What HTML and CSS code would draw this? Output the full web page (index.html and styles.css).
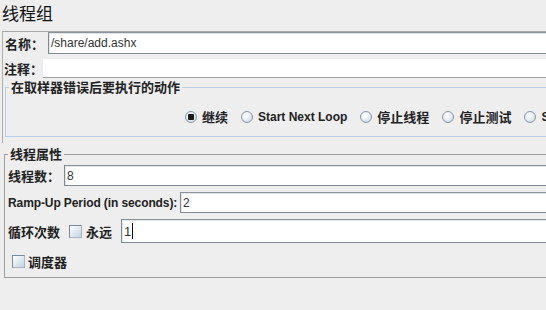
FILE: index.html
```html
<!DOCTYPE html>
<html lang="zh">
<head>
    <meta charset="UTF-8">
    <title>线程组</title>
    <link rel="stylesheet" href="styles.css">
</head>
<body>
    <h1 class="title">线程组</h1>

    <div class="panel">
        <div class="row name-row">
            <label class="label name-label">名称：</label>
            <div class="field">/share/add.ashx</div>
        </div>
        <div class="row comment-row">
            <label class="label comment-label">注释：</label>
            <div class="field plain"></div>
        </div>

        <fieldset class="box action-box">
            <legend>在取样器错误后要执行的动作</legend>
            <div class="radios">
                <span class="opt"><span class="radio on"></span><span class="cjk">继续</span></span>
                <span class="opt"><span class="radio"></span><span class="en">Start Next Loop</span></span>
                <span class="opt"><span class="radio"></span><span class="cjk">停止线程</span></span>
                <span class="opt"><span class="radio"></span><span class="cjk">停止测试</span></span>
                <span class="opt"><span class="radio"></span><span class="en">Stop Test Now</span></span>
            </div>
        </fieldset>
    </div>

    <fieldset class="box props-box">
        <legend>线程属性</legend>
        <div class="row threads-row">
            <label class="label cjk">线程数：</label>
            <div class="field">8</div>
        </div>
        <div class="row ramp-row">
            <label class="label en">Ramp-Up Period (in seconds):</label>
            <div class="field">2</div>
        </div>
        <div class="row loop-row">
            <label class="label cjk">循环次数</label>
            <span class="check"></span>
            <span class="cjk forever">永远</span>
            <div class="field">1<span class="caret"></span></div>
        </div>
        <div class="row sched-row">
            <span class="check"></span>
            <span class="cjk">调度器</span>
        </div>
    </fieldset>
</body>
</html>
```

FILE: styles.css
```css
body {
    margin: 0;
    background-color: #eeeeee;
    font-family: "Liberation Sans", "Noto Sans CJK SC", sans-serif;
    color: #222;
    width: 546px;
    height: 310px;
    overflow: hidden;
}

.title {
    margin: 0;
    padding: 1px 0 0 2px;
    height: 30px;
    font-family: "Noto Sans CJK SC", sans-serif;
    font-size: 17px;
    font-weight: normal;
    line-height: 24px;
    color: #111;
}

.panel {
    margin-left: 2px;
    margin-right: -40px;
    border-left: 1px solid #b0b0b0;
    border-top: 1px solid #a8a8a8;
    height: 111px;
}

.row {
    display: flex;
    align-items: center;
}

.label,
.cjk {
    font-family: "Noto Sans CJK SC", sans-serif;
    font-size: 13px;
    font-weight: bold;
    white-space: nowrap;
}

.en {
    font-family: "Liberation Sans", sans-serif;
    font-size: 12px;
    font-weight: bold;
    white-space: nowrap;
}

.field {
    flex: 1;
    height: 100%;
    box-sizing: border-box;
    background-color: #fff;
    border: 1px solid #7f8c97;
    border-top-color: #8a939b;
    box-shadow: inset 1px 1px 0 #e2e6ea;
    font-family: "Liberation Sans", sans-serif;
    font-size: 12px;
    color: #333;
    padding-left: 2px;
    display: flex;
    align-items: center;
}

.field.plain {
    border: none;
    box-shadow: none;
}

.name-row {
    height: 22px;
}

.name-label {
    width: 45px;
    padding-left: 2px;
    box-sizing: border-box;
}

.comment-row {
    margin-top: 5px;
    height: 19px;
}

.comment-row .field {
    border-bottom: 1px solid #a0a0a0;
}

.comment-label {
    width: 40px;
    padding-left: 1px;
    box-sizing: border-box;
}

.box {
    margin: 0;
    padding: 0;
    min-width: 0;
}

.box legend {
    font-family: "Noto Sans CJK SC", sans-serif;
    font-size: 13px;
    font-weight: bold;
    padding: 0 2px;
    margin-left: 3px;
    line-height: 14px;
}

.action-box {
    margin: 2px 0 0 2px;
    height: 57px;
    box-sizing: border-box;
    border: 1px solid #b8cfe5;
    border-right: none;
}

.radios {
    display: flex;
    align-items: center;
    padding: 13px 0 0 179px;
    gap: 13px;
}

.opt {
    display: flex;
    align-items: center;
    gap: 5px;
}

.radio {
    width: 12px;
    height: 12px;
    box-sizing: border-box;
    border-radius: 50%;
    border: 1px solid #8a98a5;
    background: radial-gradient(circle at 40% 35%, #ffffff 0%, #e8eef4 45%, #c3d0dc 100%);
    position: relative;
}

.radio.on::after {
    content: "";
    position: absolute;
    left: 2px;
    top: 2px;
    width: 6px;
    height: 6px;
    border-radius: 1px;
    background-color: #1a1a1a;
}

.props-box {
    margin: 4px -40px 0 4px;
    height: 131px;
    box-sizing: border-box;
    border: 1px solid #9e9e9e;
    border-right: none;
}

.props-box .label {
    padding-left: 3px;
}

.threads-row {
    margin-top: 4px;
    height: 21px;
}

.threads-row .label {
    width: 56px;
}

.ramp-row {
    margin-top: 6px;
    height: 21px;
}

.ramp-row .label {
    width: 175px;
    box-sizing: border-box;
    letter-spacing: -0.1px;
}

.loop-row {
    margin-top: 6px;
    height: 24px;
}

.loop-row .field {
    margin-left: 9px;
    font-size: 13px;
}

.check {
    width: 13px;
    height: 13px;
    box-sizing: border-box;
    border: 1px solid #7a8a99;
    border-right-color: #a9b6c2;
    border-bottom-color: #a9b6c2;
    background: linear-gradient(135deg, #ffffff 0%, #dbe4ed 60%, #c5d3e0 100%);
    flex-shrink: 0;
}

.loop-row .check {
    margin-left: 9px;
    margin-right: 4px;
}

.caret {
    display: inline-block;
    width: 1px;
    height: 16px;
    margin-left: 1px;
    background-color: #111;
}

.sched-row {
    margin-top: 9px;
    padding-left: 7px;
    gap: 3px;
}
```
